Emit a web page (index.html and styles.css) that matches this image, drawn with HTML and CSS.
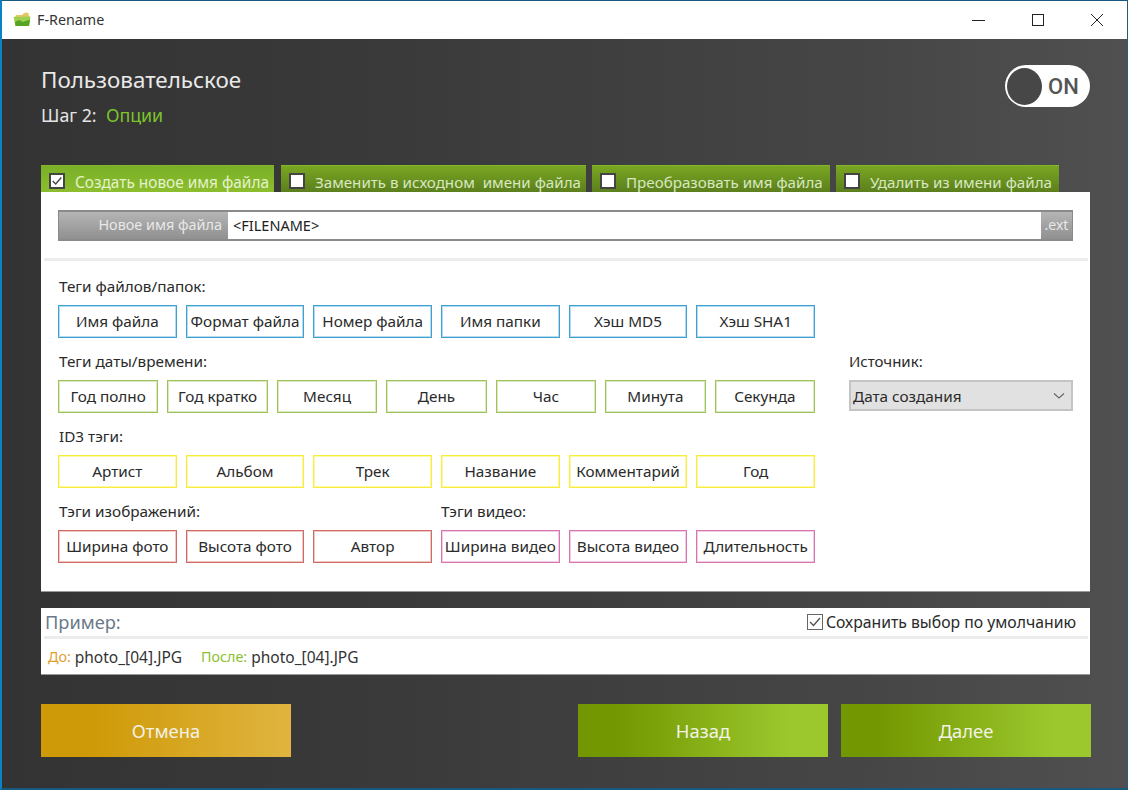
FILE: index.html
```html
<!DOCTYPE html>
<html lang="ru">
<head>
<meta charset="utf-8">
<title>F-Rename</title>
<link rel="stylesheet" href="styles.css">
</head>
<body>
<div class="window">
  <header class="titlebar">
    <svg class="logo" width="18" height="15" viewBox="0 0 18 15"><path d="M2 5 L3 3 L9 3 L11 1 L15 0.5 L16.5 5Z" fill="#e3c765"/><path d="M0.5 5 L17.5 4.5 L16 14 L2.5 14Z" fill="#9dd04e"/><path d="M2 10 L6 8 L10 10 L17 7.5 L16 14 L2.5 14Z" fill="#55a524"/></svg>
    <span class="app-name">F-Rename</span>
    <div class="controls">
      <svg class="ctl" width="58" height="14" viewBox="0 0 58 14"><path d="M22 7.5H35" stroke="#222" fill="none"/></svg>
      <svg class="ctl" width="58" height="14" viewBox="0 0 58 14"><rect x="23.5" y="1.5" width="11" height="11" stroke="#222" fill="none"/></svg>
      <svg class="ctl" width="58" height="14" viewBox="0 0 58 14"><path d="M23 1L35 13M35 1L23 13" stroke="#222" fill="none"/></svg>
    </div>
  </header>
  <main class="content">
    <div class="head">
      <div>
        <h1 class="title">Пользовательское</h1>
        <p class="step">Шаг 2:&nbsp; <span class="step-name">Опции</span></p>
      </div>
      <div class="toggle"><span class="knob"></span><span class="on">ON</span></div>
    </div>
    <div class="tabs">
      <div class="tab tab-active tab-1"><span class="cb"><svg width="14" height="14" viewBox="0 0 14 14"><path d="M2 7L5.5 10.5L12 3" stroke="#444" stroke-width="1.6" fill="none"/></svg></span>Создать новое имя файла</div>
      <div class="tab tab-2"><span class="cb"></span>Заменить в исходном&nbsp; имени файла</div>
      <div class="tab tab-3"><span class="cb"></span>Преобразовать имя файла</div>
      <div class="tab tab-4"><span class="cb"></span>Удалить из имени файла</div>
    </div>
    <section class="panel">
      <div class="name-bar">
        <div class="name-label">Новое имя файла</div>
        <div class="name-value">&lt;FILENAME&gt;</div>
        <div class="name-ext">.ext</div>
      </div>
      <div class="rule"></div>
      <div class="tag-area">
        <div class="tag-groups">
          <div class="label">Теги файлов/папок:</div>
          <div class="row six">
            <div class="tag blue">Имя файла</div><div class="tag blue">Формат файла</div><div class="tag blue">Номер файла</div><div class="tag blue">Имя папки</div><div class="tag blue">Хэш MD5</div><div class="tag blue">Хэш SHA1</div>
          </div>
          <div class="label">Теги даты/времени:</div>
          <div class="row seven">
            <div class="tag green">Год полно</div><div class="tag green">Год кратко</div><div class="tag green">Месяц</div><div class="tag green">День</div><div class="tag green">Час</div><div class="tag green">Минута</div><div class="tag green">Секунда</div>
          </div>
          <div class="label">ID3 тэги:</div>
          <div class="row six">
            <div class="tag yellow">Артист</div><div class="tag yellow">Альбом</div><div class="tag yellow">Трек</div><div class="tag yellow">Название</div><div class="tag yellow">Комментарий</div><div class="tag yellow">Год</div>
          </div>
          <div class="row six labels">
            <div class="label half">Тэги изображений:</div><div class="label half">Тэги видео:</div>
          </div>
          <div class="row six">
            <div class="tag red">Ширина фото</div><div class="tag red">Высота фото</div><div class="tag red">Автор</div><div class="tag pink">Ширина видео</div><div class="tag pink">Высота видео</div><div class="tag pink">Длительность</div>
          </div>
        </div>
        <div class="source">
          <div class="label">Источник:</div>
          <div class="select">Дата создания<svg width="12" height="8" viewBox="0 0 12 8"><path d="M1 1.5L6 6L11 1.5" stroke="#666" stroke-width="1.1" fill="none"/></svg></div>
        </div>
      </div>
    </section>
    <section class="example">
      <div class="ex-head">
        <span class="ex-title">Пример:</span>
        <span class="save"><span class="cb cb-small"><svg width="14" height="14" viewBox="0 0 14 14"><path d="M2 7L5.5 10.5L12 3" stroke="#555" stroke-width="1.4" fill="none"/></svg></span>Сохранить выбор по умолчанию</span>
      </div>
      <div class="ex-body">
        <span class="ex-key before">До:</span><span class="ex-file">photo_[04].JPG</span>
        <span class="ex-key after">После:</span><span class="ex-file">photo_[04].JPG</span>
      </div>
    </section>
    <div class="actions">
      <div class="btn btn-gold">Отмена</div>
      <div class="spacer"></div>
      <div class="btn btn-green">Назад</div>
      <div class="btn btn-green">Далее</div>
    </div>
  </main>
</div>
</body>
</html>
```
FILE: styles.css
```css
* { box-sizing: border-box; }
html, body { margin: 0; padding: 0; }
body { width: 1128px; height: 790px; overflow: hidden; font-family: "Noto Sans", "Open Sans", sans-serif; }
.window { width: 1128px; height: 790px; display: flex; flex-direction: column; border: 1px solid #17597f; border-left: 2px solid #0a83c6; border-bottom: 2px solid #17597f; border-right: 1px solid #2a5a78; }
.titlebar { height: 38px; flex: none; background: #fff; display: flex; align-items: center; padding-left: 11px; }
.logo { flex: none; margin-top: -1px; }
.app-name { font-size: 14.3px; color: #333; margin-left: 6px; margin-top: -1px; }
.controls { margin-left: auto; display: flex; margin-right: 1px; }
.ctl { display: block; margin-left: 1px; }
.content { flex: 1; background: linear-gradient(90deg, #333 0%, #3a3a3a 35%, #454545 75%, #505050 100%); padding: 0 37px 0 39px; display: flex; flex-direction: column; min-height: 0; }
.head { height: 126px; flex: none; display: flex; justify-content: space-between; padding-top: 25px; }
.title { margin: 0; font-size: 22.4px; line-height: 32px; font-weight: 400; color: #e9e9e9; }
.step { margin: 7px 0 0; font-size: 17.8px; line-height: 24px; color: #e4e4e4; }
.step-name { color: #7dc42c; }
.toggle { width: 85px; height: 42px; margin-top: 1px; background: #fff; border-radius: 21px; display: flex; align-items: center; padding-left: 2px; }
.knob { width: 35px; height: 37px; background: #474747; border-radius: 50%; flex: none; }
.on { font-family: "Roboto", sans-serif; font-size: 22px; font-weight: 500; color: #555; margin-left: 6px; }
.tabs { display: flex; height: 27px; flex: none; }
.tab { height: 27px; padding-left: 8px; padding-top: 6px; display: flex; align-items: center; font-size: 15.15px; color: #d8e8c0; background: linear-gradient(180deg, #79a622 0%, #5c7f1d 100%); white-space: nowrap; border-top: 1px solid #86b52a; }
.tab-active { background: linear-gradient(180deg, #79b028, #8cbd2e); color: #e4f2cb; font-size: 15.4px; }
.tab-1 { width: 233px; margin-right: 7px; }
.tab-2 { width: 305px; margin-right: 6px; }
.tab-3 { width: 238px; margin-right: 6px; }
.tab-4 { width: 223px; }
.cb { width: 16px; height: 16px; background: #fff; border: 1px solid #444; margin-right: 10px; flex: none; display: flex; align-items: center; justify-content: center; }
.tab .cb { border-width: 2px; margin-top: -3px; }
.panel { height: 400px; flex: none; background: #fff; border-bottom: 1px solid #999; padding-top: 18px; }
.name-bar { height: 31px; margin: 0 17px; width: 1015px; display: flex; border: 1px solid #8a8a8a; border-width: 2px 1px 2px 1px; font-size: 14.5px; color: #222; }
.name-label { width: 169px; background: linear-gradient(180deg, #b5b5b5, #909090); color: #e8e8e8; text-align: right; padding-right: 6px; line-height: 26px; font-size: 14.4px; }
.name-value { flex: 1; padding-left: 5px; line-height: 26px; }
.name-ext { width: 31px; background: linear-gradient(180deg, #b5b5b5, #909090); color: #e8e8e8; text-align: center; line-height: 26px; font-size: 14px; }
.rule { height: 3px; background: #ececec; margin: 17px 2px 0 3px; }
.tag-area { display: flex; padding: 16px 0 0 17px; }
.tag-groups { width: 757px; flex: none; }
.label { height: 28px; font-size: 15.3px; line-height: 18px; color: #2a2a2a; padding-left: 1px; }
.labels .half + .half { padding-left: 0; }
.row { display: grid; gap: 9px; margin-bottom: 14px; }
.six { grid-template-columns: repeat(6, 1fr); }
.seven { grid-template-columns: repeat(7, 1fr); }
.labels { margin-bottom: 0; }
.labels .half { grid-column: span 3; }
.row.labels + .row { margin-bottom: 0; }
.tag { height: 33px; border: 1px solid var(--edge); box-shadow: inset 0 0 0 1px var(--edge-soft); display: flex; align-items: center; justify-content: center; padding-bottom: 1px; font-size: 15.3px; color: #2a2a2a; white-space: nowrap; }
.blue { --edge: #3fa0d2; --edge-soft: #b4dbef; }
.green { --edge: #a0c25c; --edge-soft: #dbe9c0; }
.yellow { --edge: #f9ec3c; --edge-soft: #fdf8a8; }
.red { --edge: #cf6a64; --edge-soft: #efc8c5; }
.pink { --edge: #d873b2; --edge-soft: #f2cde4; }
.source { width: 224px; margin-left: 34px; padding-top: 75px; flex: none; }
.source .label { padding-left: 0; font-size: 15px; }
.select { height: 31px; background: #e1e1e1; border: 2px solid #c4c4c4; font-size: 15.3px; color: #2a2a2a; display: flex; align-items: center; justify-content: space-between; padding: 0 6px 0 2px; }
.example { height: 67px; flex: none; margin-top: 16px; background: #fff; border-bottom: 1px solid #999; }
.ex-head { height: 31px; margin: 0 2px 0 3px; border-bottom: 3px solid #ececec; display: flex; align-items: center; justify-content: space-between; padding-left: 1px; padding-right: 12px; }
.ex-title { font-size: 18.2px; color: #6a7a8a; }
.save { display: flex; align-items: center; font-size: 15.75px; color: #2a2a2a; }
.cb-small { margin-right: 3px; border-color: #666; }
.ex-body { display: flex; align-items: center; height: 35px; padding-left: 7px; font-size: 15.5px; color: #333; }
.ex-key { font-size: 14.3px; }
.before { color: #e0a030; margin-right: 4px; }
.after { color: #8cc034; margin-left: 19px; margin-right: 4px; }
.actions { display: flex; margin-top: 29px; height: 53px; flex: none; width: 1050px; }
.btn { width: 250px; height: 53px; display: flex; align-items: center; justify-content: center; font-size: 18.4px; color: #f2f2e6; }
.btn-gold { background: linear-gradient(90deg, #cf9a08 20%, #e0b43f 100%); }
.btn-green { background: linear-gradient(90deg, #739700 15%, #9cc82e 85%); }
.btn-green + .btn-green { margin-left: 13px; }
.spacer { flex: 1; }
```
